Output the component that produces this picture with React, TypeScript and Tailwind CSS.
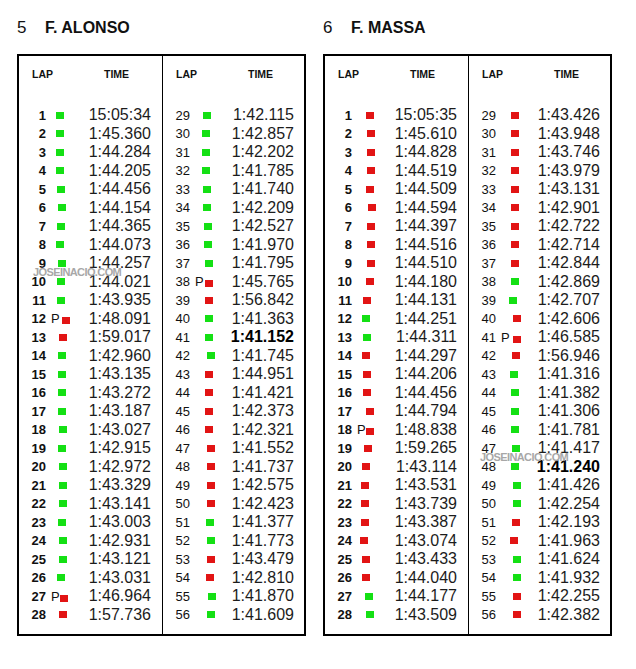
const ALONSO = [
  "1 15:05:34 g 0", "2 1:45.360 g 0", "3 1:44.284 g 0", "4 1:44.205 g 0",
  "5 1:44.456 g 1", "6 1:44.154 g 2", "7 1:44.365 g 1", "8 1:44.073 g 0",
  "9 1:44.257 g 2", "10 1:44.021 g 1", "11 1:43.935 g 1", "12P 1:48.091 r 6",
  "13 1:59.017 r 3", "14 1:42.960 g 2", "15 1:43.135 g 2", "16 1:43.272 g 2",
  "17 1:43.187 g 2", "18 1:43.027 g 3", "19 1:42.915 g 2", "20 1:42.972 g 3",
  "21 1:43.329 g 3", "22 1:43.141 g 3", "23 1:43.003 g 2", "24 1:42.931 g 3",
  "25 1:43.121 g 3", "26 1:43.031 g 1", "27P 1:46.964 r 4", "28 1:57.736 r 3",
  "29 1:42.115 g 0", "30 1:42.857 g -1", "31 1:42.202 g -1", "32 1:41.785 g -1",
  "33 1:41.740 g 0", "34 1:42.209 g 0", "35 1:42.527 g 1", "36 1:41.970 g 1",
  "37 1:41.795 g 2", "38P 1:45.765 r 2", "39 1:56.842 r 2", "40 1:41.363 g 2",
  "41 *1:41.152 g 2", "42 1:41.745 g 4", "43 1:44.951 r 2", "44 1:41.421 r 2",
  "45 1:42.373 r 2", "46 1:42.321 r 2", "47 1:41.552 r 4", "48 1:41.737 r 4",
  "49 1:42.575 r 4", "50 1:42.423 r 4", "51 1:41.377 g 3", "52 1:41.773 g 4",
  "53 1:43.479 r 4", "54 1:42.810 r 3", "55 1:41.870 g 5", "56 1:41.609 g 4",
]

const MASSA = [
  "1 15:05:35 r 4", "2 1:45.610 r 5", "3 1:44.828 r 5", "4 1:44.519 r 5",
  "5 1:44.509 r 4", "6 1:44.594 r 6", "7 1:44.397 r 5", "8 1:44.516 r 5",
  "9 1:44.510 r 5", "10 1:44.180 r 4", "11 1:44.131 r 1", "12 1:44.251 g 0",
  "13 1:44.311 g 1", "14 1:44.297 r 0", "15 1:44.206 r 1", "16 1:44.456 r 1",
  "17 1:44.794 r 4", "18P 1:48.838 r 4", "19 1:59.265 r 2", "20 1:43.114 r 0",
  "21 1:43.531 r -1", "22 1:43.739 r -1", "23 1:43.387 r -1", "24 1:43.074 r -2",
  "25 1:43.433 r 0", "26 1:44.040 r 0", "27 1:44.177 g 3", "28 1:43.509 g 4",
  "29 1:43.426 r 2", "30 1:43.948 r 2", "31 1:43.746 r 2", "32 1:43.979 r 2",
  "33 1:43.131 r 2", "34 1:42.901 r 2", "35 1:42.722 r 2", "36 1:42.714 r 2",
  "37 1:42.844 r 2", "38 1:42.869 g 2", "39 1:42.707 g 0", "40 1:42.606 r 4",
  "41P 1:46.585 r 4", "42 1:56.946 r 3", "43 1:41.316 g 1", "44 1:41.382 g 2",
  "45 1:41.306 g 2", "46 1:41.781 g 2", "47 1:41.417 g 3", "48 *1:41.240 g 2",
  "49 1:41.426 g 4", "50 1:42.254 g 4", "51 1:42.193 r 3", "52 1:41.963 r 1",
  "53 1:41.624 g 4", "54 1:41.932 g 4", "55 1:42.255 r 4", "56 1:42.382 r 4",
]

function LapRow({ entry, base, timeW, heavy }: { entry: string; base: number; timeW: number; heavy: boolean }) {
  const [lapRaw, timeRaw, c, dxRaw] = entry.split(" ")
  const pit = lapRaw.endsWith("P")
  const lap = lapRaw.replace("P", "")
  const best = timeRaw.startsWith("*")
  const time = timeRaw.replace("*", "")
  const sq = base + Number(dxRaw)

  return (
    <div className="flex h-[18.5px] items-center">
      <span className={`w-[27px] text-right text-[13px] leading-none ${heavy ? "font-bold" : "font-normal"}`}>
        {lap}
      </span>
      <div className="flex w-[35px] items-center" style={{ paddingLeft: pit ? 5 : sq - 27 }}>
        {pit && (
          <span className="text-[13px] leading-none" style={{ width: sq - 32 }}>
            P
          </span>
        )}
        <span
          className={`h-[7px] w-[8px] ${c === "g" ? "bg-[#14e014]" : "bg-[#e21414]"}`}
          style={pit ? { marginTop: 4 } : undefined}
        />
      </div>
      <span
        className={`text-right text-[16px] leading-none text-[#1c1c1c] ${best ? "font-bold text-black" : ""}`}
        style={{ width: timeW }}
      >
        {time}
      </span>
    </div>
  )
}

function LapColumn({ laps, base, timeW, heavy, divider }: { laps: string[]; base: number; timeW: number; heavy: boolean; divider?: boolean }) {
  return (
    <div className={`flex flex-col pt-[11px] pb-[10px] ${divider ? "w-[144px] border-r border-black" : "flex-1"}`}>
      <div className="flex h-[14px] items-center pl-[13px] text-[10.5px] font-bold leading-none">
        <span className="w-[72px]">LAP</span>
        <span>TIME</span>
      </div>
      <div className="mt-[25px] flex flex-col">
        {laps.map((l) => (
          <LapRow key={l} entry={l} base={base} timeW={timeW} heavy={heavy} />
        ))}
      </div>
    </div>
  )
}

function DriverPanel({ pos, name, laps }: { pos: string; name: string; laps: string[] }) {
  return (
    <section className="flex w-[289px] flex-col">
      <div className="h-[20px] whitespace-nowrap text-[17px] leading-[20px]">
        <span className="inline-block w-[28px]">{pos}</span>
        <span className="text-[16px] font-bold">{name}</span>
      </div>
      <div className="mt-[16px] flex border-2 border-black">
        <LapColumn laps={laps.slice(0, 28)} base={37} timeW={70} heavy divider />
        <LapColumn laps={laps.slice(28)} base={40} timeW={69} heavy={false} />
      </div>
    </section>
  )
}

export default function App() {
  return (
    <div
      className="relative flex h-[669px] w-[636px] gap-[17px] bg-white pt-[18px] pl-[17px] text-[#111]"
      style={{ fontFamily: '"Liberation Sans", Arial, sans-serif' }}
    >
      <DriverPanel pos="5" name="F. ALONSO" laps={ALONSO} />
      <DriverPanel pos="6" name="F. MASSA" laps={MASSA} />

      <span className="absolute left-[33px] top-[267px] text-[11px] font-bold leading-none tracking-[-0.6px] text-[#9e9e9e] opacity-90 [text-shadow:0_0_1px_#fff]">
        JOSEINACIO.COM
      </span>
      <span className="absolute left-[480px] top-[452px] text-[11px] font-bold leading-none tracking-[-0.6px] text-[#9e9e9e] opacity-90 [text-shadow:0_0_1px_#fff]">
        JOSEINACIO.COM
      </span>
    </div>
  )
}
